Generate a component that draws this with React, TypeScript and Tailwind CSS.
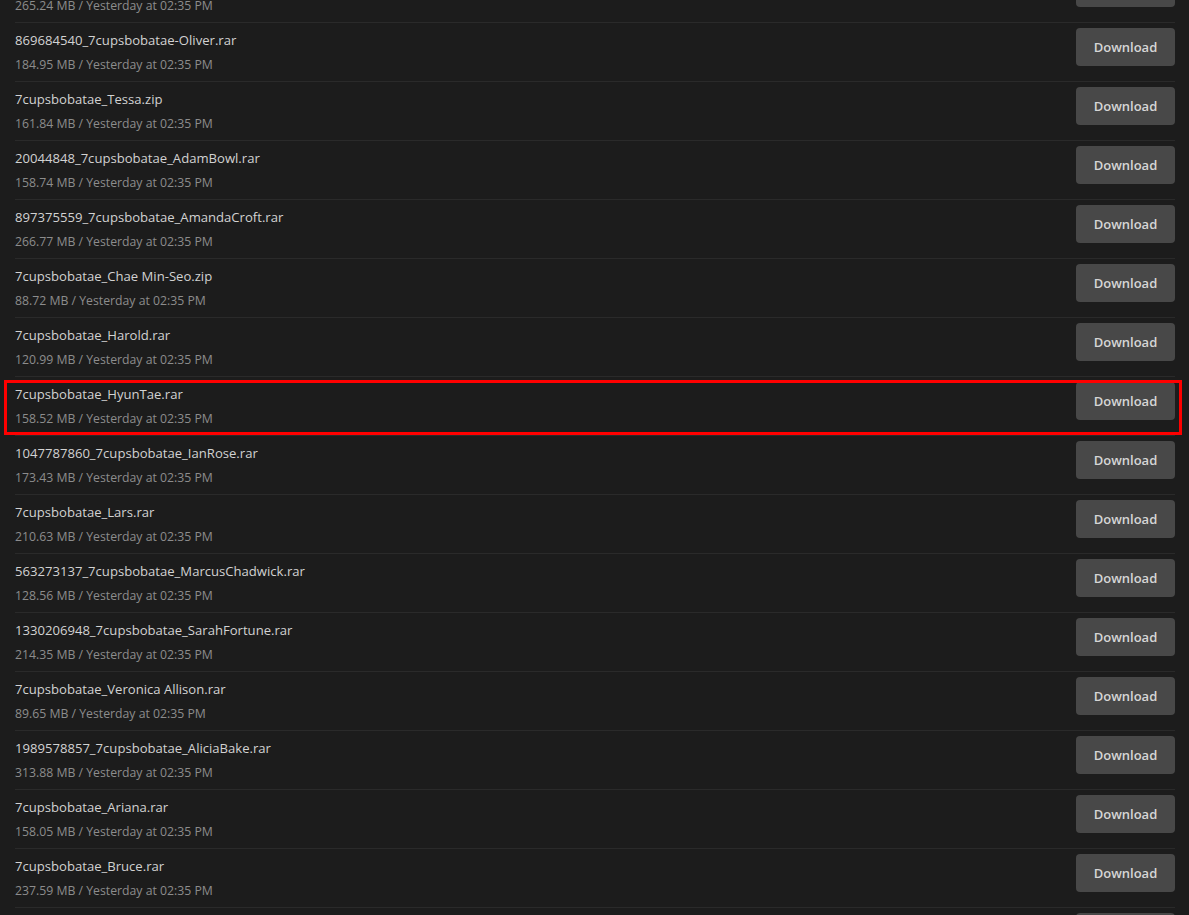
import React from "react";

type FileItem = { name: string; size: string };

const FILES: FileItem[] = [
  { name: "7cupsbobatae_Previous.rar", size: "265.24 MB" },
  { name: "869684540_7cupsbobatae-Oliver.rar", size: "184.95 MB" },
  { name: "7cupsbobatae_Tessa.zip", size: "161.84 MB" },
  { name: "20044848_7cupsbobatae_AdamBowl.rar", size: "158.74 MB" },
  { name: "897375559_7cupsbobatae_AmandaCroft.rar", size: "266.77 MB" },
  { name: "7cupsbobatae_Chae Min-Seo.zip", size: "88.72 MB" },
  { name: "7cupsbobatae_Harold.rar", size: "120.99 MB" },
  { name: "7cupsbobatae_HyunTae.rar", size: "158.52 MB" },
  { name: "1047787860_7cupsbobatae_IanRose.rar", size: "173.43 MB" },
  { name: "7cupsbobatae_Lars.rar", size: "210.63 MB" },
  { name: "563273137_7cupsbobatae_MarcusChadwick.rar", size: "128.56 MB" },
  { name: "1330206948_7cupsbobatae_SarahFortune.rar", size: "214.35 MB" },
  { name: "7cupsbobatae_Veronica Allison.rar", size: "89.65 MB" },
  { name: "1989578857_7cupsbobatae_AliciaBake.rar", size: "313.88 MB" },
  { name: "7cupsbobatae_Ariana.rar", size: "158.05 MB" },
  { name: "7cupsbobatae_Bruce.rar", size: "237.59 MB" },
  { name: "7cupsbobatae_Cassandra.rar", size: "201.12 MB" },
];

const HIGHLIGHT = "7cupsbobatae_HyunTae.rar";

export default function App() {
  return (
    <div
      className="h-[915px] overflow-hidden bg-[#1c1c1c] pl-[15px] pr-[14px]"
      style={{ fontFamily: '"Open Sans", "Noto Sans", sans-serif' }}
    >
      <ul className="-mt-[36px]">
        {FILES.map((f) => (
          <li
            key={f.name}
            className="relative flex items-start justify-between border-b border-[#2a2a2a] pt-[5px] pb-[5px]"
          >
            <div className="flex flex-col">
              <span className="text-[13.1px] leading-[25px] text-[#d2d2d2]">{f.name}</span>
              <span className="text-[12.25px] leading-[23px] text-[#8c8c8c]">
                {f.size} / Yesterday at 02:35 PM
              </span>
            </div>
            <button className="h-[38px] w-[99px] rounded-[4px] bg-[#484848] pt-px text-[13px] font-semibold text-[#d6d6d6]">
              Download
            </button>
            {f.name === HIGHLIGHT && (
              <div className="pointer-events-none absolute -left-[11px] -right-[7px] top-[3px] bottom-0 border-[3px] border-[#ff0000]" />
            )}
          </li>
        ))}
      </ul>
    </div>
  );
}
